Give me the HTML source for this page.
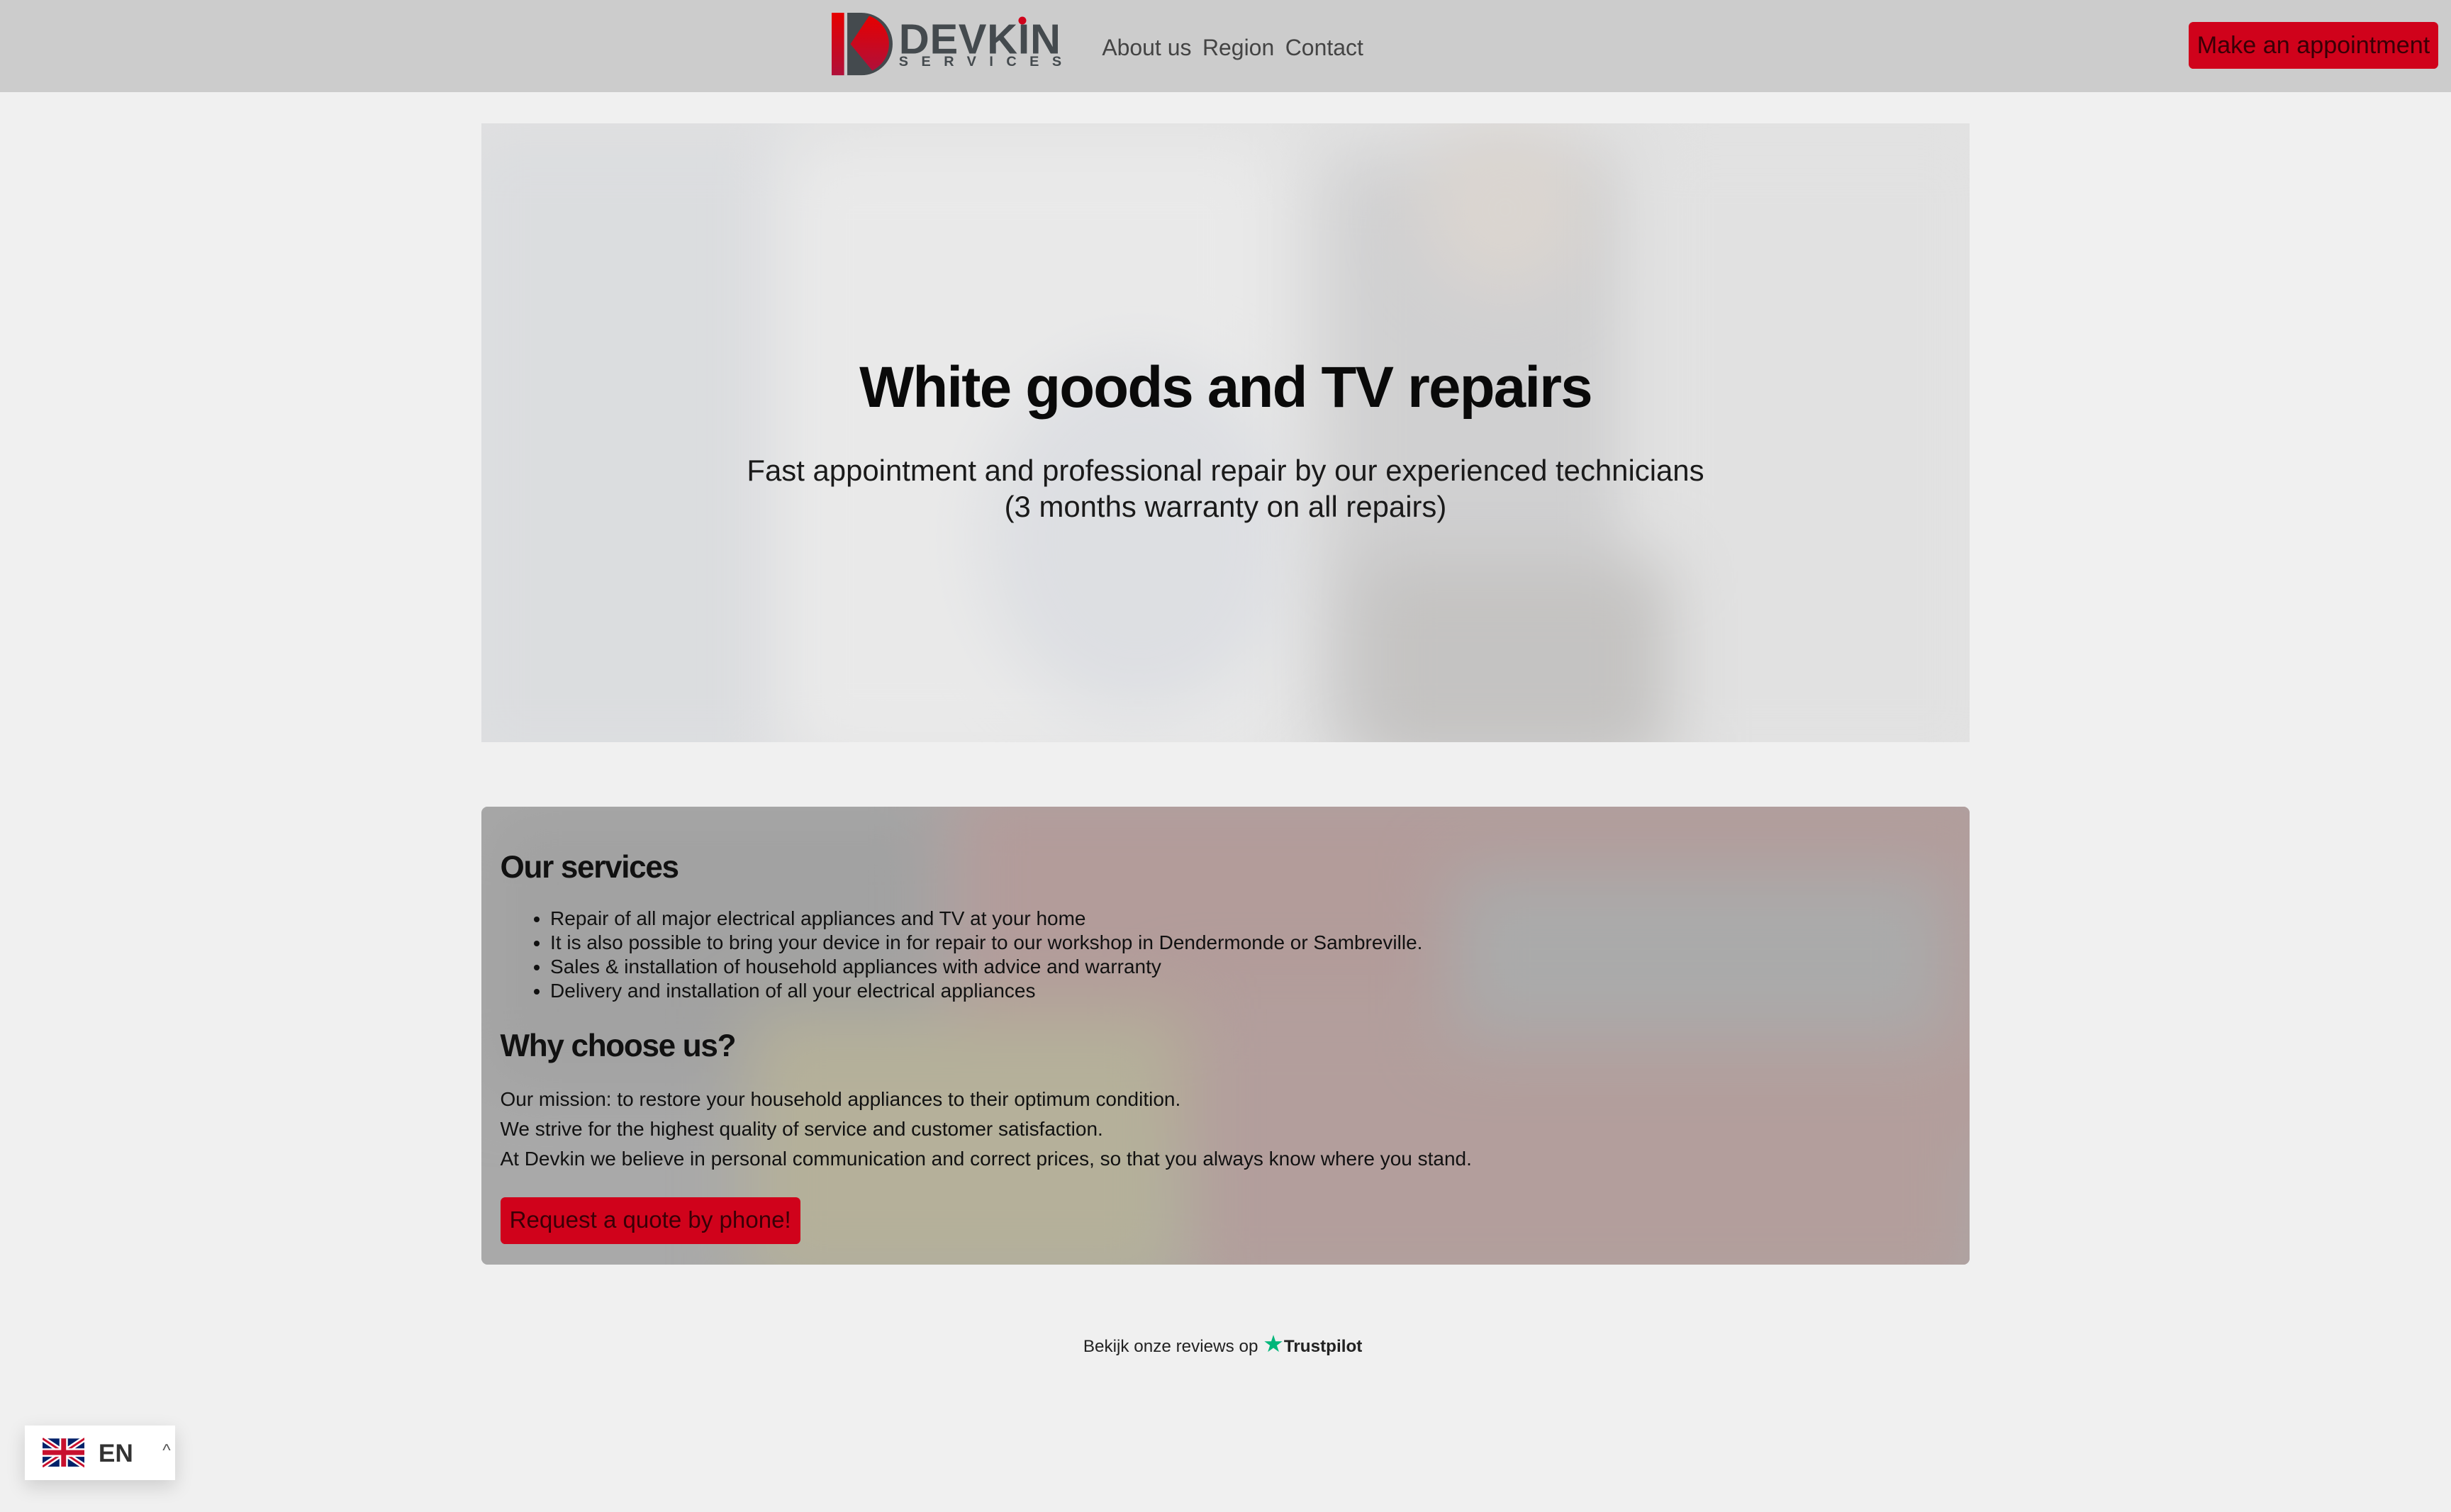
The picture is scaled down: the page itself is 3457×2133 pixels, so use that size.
<!DOCTYPE html>
<html><head><meta charset="utf-8"><style>
html,body{margin:0;padding:0}
html{width:3457px;height:2133px;overflow:hidden;background:#f0f0f0}
body{zoom:2.2047;width:1568px;height:967px;position:relative;font-family:"Liberation Sans",sans-serif;background:#f0f0f0;overflow:hidden}
.hdr{position:absolute;left:0;top:0;width:1568px;height:59px;background:#cccccc}
.nav{position:absolute;left:705px;top:22px;font-size:14.5px;color:#444}
.nav span{margin-right:3px}
.btn{position:absolute;background:#d0021b;color:#3a0006;border-radius:3px;font-size:15.5px;white-space:nowrap}
.hero{position:absolute;left:308px;top:79px;width:952px;height:396px;overflow:hidden;background:#dcdcdc}
.blob{position:absolute;filter:blur(22px)}
.hero .ov{position:absolute;inset:0;background:rgba(232,232,232,.55)}
.hero h1{position:absolute;left:0;right:0;top:148px;margin:0;text-align:center;font-size:37px;font-weight:bold;color:#0a0a0a;letter-spacing:-0.8px}
.hero p{position:absolute;left:0;right:0;top:211px;margin:0;text-align:center;font-size:19px;line-height:23px;color:#1a1a1a}
.srv{position:absolute;left:308px;top:516px;width:952px;height:293px;border-radius:4px;overflow:hidden;background:#a0a0a0}
.srv .ov{position:absolute;inset:0;background:rgba(175,175,175,.6)}
.srv .c{position:absolute;left:12px;top:0;color:#111;font-size:12.7px}
.srv h2{margin:0;font-size:20px;font-weight:bold;position:absolute;white-space:nowrap;letter-spacing:-0.6px}
.srv ul{position:absolute;top:64px;left:0;margin:0;padding-left:32px;line-height:15.4px;white-space:nowrap}
.srv .p{position:absolute;top:178px;left:0;line-height:19px;white-space:nowrap}
.tp{position:absolute;left:693px;top:851px;font-size:11px;color:#222;white-space:nowrap}
.lang{position:absolute;left:16px;top:912px;width:96px;height:35px;background:#fff;box-shadow:0 4px 12px rgba(0,0,0,.15)}
</style></head><body>
<div class="hdr">
<svg style="position:absolute;left:532px;top:8px" width="150" height="42" viewBox="0 0 150 42">
<defs><linearGradient id="g" x1="0" y1="0" x2="0" y2="1"><stop offset="0" stop-color="#e60000"/><stop offset="1" stop-color="#b0103a"/></linearGradient></defs>
<rect x="0" y="0" width="8" height="40" fill="url(#g)"/>
<path d="M10 0 H19 A20 20 0 0 1 19 40 H10 Z" fill="#444a4e"/>
<path d="M12 20 L24 2 A19 19 0 0 1 26 37 Z" fill="url(#g)"/>
<text x="43" y="26" font-family="Liberation Sans,sans-serif" font-size="27" font-weight="bold" fill="#444a4e" letter-spacing="0.5" textLength="104">DEVKIN</text>
<circle cx="122" cy="5" r="2.5" fill="#d0021b"/>
<text x="43" y="34" font-family="Liberation Sans,sans-serif" font-size="9" font-weight="bold" fill="#444a4e" textLength="104">SERVICES</text>
</svg>
<div class="nav"><span>About us</span> <span>Region</span> <span>Contact</span></div>
<div class="btn" style="left:1400px;top:14px;width:160px;height:30px;line-height:30px;text-align:center">Make an appointment</div>
</div>

<div class="hero">
<div class="blob" style="left:-20px;top:0;width:230px;height:420px;background:#cdd0d6"></div>
<div class="blob" style="left:190px;top:10px;width:320px;height:400px;background:#ececec"></div>
<div class="blob" style="left:320px;top:150px;width:200px;height:230px;border-radius:50%;background:#d0d4dc"></div>
<div class="blob" style="left:540px;top:20px;width:200px;height:380px;background:#b4b4b6"></div>
<div class="blob" style="left:600px;top:0;width:110px;height:110px;border-radius:50%;background:#cbbfb4"></div>
<div class="blob" style="left:740px;top:0;width:230px;height:420px;background:#dadada"></div>
<div class="blob" style="left:560px;top:280px;width:200px;height:130px;background:#9a9794"></div>
<div class="ov"></div>
<h1>White goods and TV repairs</h1>
<p>Fast appointment and professional repair by our experienced technicians<br>(3 months warranty on all repairs)</p>
</div>

<div class="srv">
<div class="blob" style="left:0;top:0;width:300px;height:180px;background:#8e8e8e"></div>
<div class="blob" style="left:300px;top:-20px;width:680px;height:240px;background:#b8807c"></div>
<div class="blob" style="left:440px;top:120px;width:520px;height:200px;background:#b88680"></div>
<div class="blob" style="left:170px;top:130px;width:280px;height:180px;background:#bdb27a"></div>
<div class="blob" style="left:620px;top:40px;width:320px;height:110px;background:#a4a4a4"></div>
<div class="ov"></div>
<div class="c">
<h2 style="top:28px">Our services</h2>
<ul><li>Repair of all major electrical appliances and TV at your home</li><li>It is also possible to bring your device in for repair to our workshop in Dendermonde or Sambreville.</li><li>Sales &amp; installation of household appliances with advice and warranty</li><li>Delivery and installation of all your electrical appliances</li></ul>
<h2 style="top:142px">Why choose us?</h2>
<div class="p">Our mission: to restore your household appliances to their optimum condition.<br>We strive for the highest quality of service and customer satisfaction.<br>At Devkin we believe in personal communication and correct prices, so that you always know where you stand.</div>
</div>
<div class="btn" style="left:12px;top:250px;width:192px;height:30px;line-height:30px;text-align:center;font-size:15px">Request a quote by phone!</div>
</div>

<div class="tp">Bekijk onze reviews op <span style="color:#00b67a;font-size:15px">★</span><b>Trustpilot</b></div>

<div class="lang">
<svg style="position:absolute;left:11px;top:7px" width="27" height="21" viewBox="0 0 60 40">
<rect width="60" height="40" fill="#012169"/>
<path d="M0 0L60 40M60 0L0 40" stroke="#fff" stroke-width="8"/>
<path d="M0 0L60 40M60 0L0 40" stroke="#c8102e" stroke-width="3"/>
<path d="M30 0V40M0 20H60" stroke="#fff" stroke-width="12"/>
<path d="M30 0V40M0 20H60" stroke="#c8102e" stroke-width="7"/>
</svg>
<span style="position:absolute;left:47px;top:9px;font-size:16px;font-weight:bold;color:#333">EN</span>
<span style="position:absolute;left:88px;top:10px;font-size:11px;color:#555">^</span>
</div>
</body></html>
